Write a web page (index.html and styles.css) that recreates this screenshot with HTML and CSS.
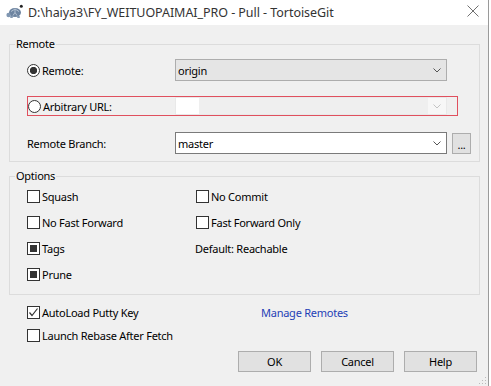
FILE: index.html
```html
<!DOCTYPE html>
<html>
<head>
<meta charset="utf-8">
<title>Pull - TortoiseGit</title>
<link rel="stylesheet" href="styles.css">
</head>
<body>
<div class="window">
  <div class="titlebar">
    <svg class="app-icon" width="18" height="15" viewBox="0 0 18 15">
      <ellipse cx="10" cy="8.5" rx="6" ry="4.6" fill="#6d84a0"/>
      <path d="M6 7.5 L10 5 L14 7.5 M8 11.5 L10 8.5 L12 11.5 M10 5 L10 8.5" stroke="#b9c6d6" stroke-width="0.9" fill="none"/>
      <circle cx="3.6" cy="11" r="2.2" fill="#8097b2"/>
      <ellipse cx="6.5" cy="13" rx="1.6" ry="1" fill="#7d93ad"/>
      <ellipse cx="13.5" cy="13" rx="1.6" ry="1" fill="#7d93ad"/>
      <circle cx="16.3" cy="2.2" r="1.5" fill="#222"/>
    </svg>
    <span class="title">D:\haiya3\FY_WEITUOPAIMAI_PRO - Pull - TortoiseGit</span>
    <svg class="close" width="12" height="12" viewBox="0 0 12 12">
      <path d="M0.5 0.5 L11.5 11.5 M11.5 0.5 L0.5 11.5" stroke="#707070" stroke-width="1" fill="none"/>
    </svg>
  </div>
  <div class="client">
    <fieldset class="group group-remote">
      <legend>Remote</legend>
      <div class="row row-remote">
        <span class="opt"><span class="radio on"></span>Remote:</span>
        <div class="combo combo-gray">
          <span class="val">origin</span>
          <svg class="chev" width="8" height="5" viewBox="0 0 8 5"><polyline points="0.5,0.5 4,4 7.5,0.5" fill="none" stroke="#555" stroke-width="1"/></svg>
        </div>
      </div>
      <div class="row row-url">
        <span class="opt opt-url"><span class="radio"></span>Arbitrary URL:</span>
        <div class="combo combo-disabled">
          <span class="blank"></span>
          <span class="chev-box"><svg class="chev" width="8" height="5" viewBox="0 0 8 5"><polyline points="0.5,0.5 4,4 7.5,0.5" fill="none" stroke="#c4c4c4" stroke-width="1"/></svg></span>
        </div>
      </div>
      <div class="row row-branch">
        <span class="lbl">Remote Branch:</span>
        <div class="combo combo-white">
          <span class="val">master</span>
          <svg class="chev" width="8" height="5" viewBox="0 0 8 5"><polyline points="0.5,0.5 4,4 7.5,0.5" fill="none" stroke="#555" stroke-width="1"/></svg>
        </div>
        <span class="btn dots">...</span>
      </div>
    </fieldset>

    <fieldset class="group group-options">
      <legend>Options</legend>
      <div class="opts-grid">
        <span class="opt"><span class="cb"></span>Squash</span>
        <span class="opt"><span class="cb"></span>No Commit</span>
        <span class="opt"><span class="cb"></span>No Fast Forward</span>
        <span class="opt"><span class="cb"></span>Fast Forward Only</span>
        <span class="opt"><span class="cb fill"></span>Tags</span>
        <span class="opt plain">Default: Reachable</span>
        <span class="opt"><span class="cb fill"></span>Prune</span>
      </div>
    </fieldset>

    <div class="extras">
      <div class="extra-row">
        <span class="opt opt-wide"><span class="cb checked"><svg width="11" height="11" viewBox="0 0 11 11"><polyline points="1.5,5.5 4,8.5 9.5,1.5" fill="none" stroke="#333" stroke-width="1.2"/></svg></span>AutoLoad Putty Key</span>
        <span class="link">Manage Remotes</span>
      </div>
      <div class="extra-row row-rebase">
        <span class="opt"><span class="cb"></span>Launch Rebase After Fetch</span>
      </div>
    </div>

    <div class="buttons">
      <span class="btn push">OK</span>
      <span class="btn push">Cancel</span>
      <span class="btn push">Help</span>
    </div>

    <svg class="grip" width="8" height="8" viewBox="0 0 8 8">
      <rect x="6" y="0" width="1" height="1" fill="#bbb"/>
      <rect x="3" y="3" width="1" height="1" fill="#bbb"/>
      <rect x="6" y="3" width="1" height="1" fill="#bbb"/>
      <rect x="0" y="6" width="1" height="1" fill="#bbb"/>
      <rect x="3" y="6" width="1" height="1" fill="#bbb"/>
      <rect x="6" y="6" width="1" height="1" fill="#bbb"/>
    </svg>
  </div>
</div>
</body>
</html>
```

FILE: styles.css
```css
* { box-sizing: border-box; }
html, body { margin: 0; padding: 0; }
body {
  width: 491px;
  height: 386px;
  overflow: hidden;
  background: #ffffff;
  font-family: "Noto Sans", "DejaVu Sans", sans-serif;
  font-size: 11px;
  letter-spacing: -0.25px;
  color: #000;
}
.window {
  width: 489px;
  height: 386px;
  border-right: 1px solid #9a9a9a;
  display: flex;
  flex-direction: column;
  background: #f0f0f0;
}
.titlebar {
  height: 25px;
  flex: none;
  background: #fff;
  display: flex;
  align-items: center;
  padding-left: 5px;
}
.app-icon { margin-right: 5px; margin-top: -2px; }
.title {
  flex: 1;
  font-size: 12.5px;
  letter-spacing: -0.05px;
  color: #333;
  white-space: nowrap;
}
.close { margin-right: 9px; margin-top: -3px; }

.client {
  flex: 1;
  position: relative;
  display: flex;
  flex-direction: column;
  padding: 11px 0 0 9px;
}
.group {
  margin: 0;
  width: 471px;
  border: 1px solid #dcdcdc;
  padding: 7px 0 7px 17px;
  min-width: 0;
}
.group legend {
  margin-left: -12px;
  padding: 0 1px;
  line-height: 16px;
}

.row { display: flex; align-items: center; }
.row-remote { height: 22px; }
.row-url {
  margin-top: 15px;
  height: 20px;
  width: 431px;
  border: 1px solid #e0505e;
}
.row-branch { margin-top: 16px; height: 22px; }

.opt { display: flex; align-items: center; white-space: nowrap; }
.row .opt, .lbl { width: 148px; flex: none; }
.row .opt-url { width: 147px; }

.radio {
  width: 13px;
  height: 13px;
  border: 1px solid #333;
  border-radius: 50%;
  background: #fff;
  margin-right: 2px;
  flex: none;
}
.radio.on { background: radial-gradient(circle, #333 0 3.4px, #fff 3.9px); }

.cb {
  width: 13px;
  height: 13px;
  border: 1px solid #333;
  background: #fff;
  margin-right: 2px;
  flex: none;
  display: flex;
}
.cb.fill { background: #333; box-shadow: inset 0 0 0 2px #fff; }

.combo {
  width: 272px;
  display: flex;
  align-items: center;
  flex: none;
}
.combo .val { flex: 1; padding-left: 2px; }
.combo .chev { margin-right: 5px; }
.combo-gray { height: 22px; background: #e5e5e5; border: 1px solid #adadad; }
.combo-white { height: 22px; background: #fff; border: 1px solid #7a7a7a; }
.combo-disabled {
  height: 18px;
  background: #efefef;
  border: 1px solid #e9e9e9;
  justify-content: space-between;
}
.combo-disabled .blank { width: 23px; height: 16px; background: #fff; }
.combo-disabled .chev-box {
  width: 18px;
  height: 16px;
  background: #f7f7f7;
  display: flex;
  align-items: center;
  justify-content: center;
}
.combo-disabled .chev-box .chev { margin: 0; }

.btn {
  display: flex;
  align-items: center;
  justify-content: center;
  background: #e1e1e1;
  border: 1px solid #adadad;
  flex: none;
}
.dots {
  width: 19px;
  height: 21px;
  margin-left: 5px;
  align-items: flex-end;
  padding-bottom: 3px;
  line-height: 1;
}

.group-options { margin-top: 6px; padding: 2px 0 10px 17px; }
.opts-grid {
  display: grid;
  grid-template-columns: 169px auto;
  grid-auto-rows: 20px;
  row-gap: 6px;
}
.opts-grid .plain { margin-left: -1px; }

.extras { padding-left: 18px; margin-top: 7px; }
.extra-row { display: flex; align-items: center; height: 20px; }
.row-rebase { margin-top: 3px; }
.opt-wide { width: 234px; }
.link { color: #1f3fb6; }

.buttons {
  display: flex;
  justify-content: flex-end;
  gap: 10px;
  margin-top: 6px;
  padding-right: 11px;
}
.push { width: 73px; height: 21px; }

.grip { position: absolute; right: 1px; bottom: 1px; }
```
